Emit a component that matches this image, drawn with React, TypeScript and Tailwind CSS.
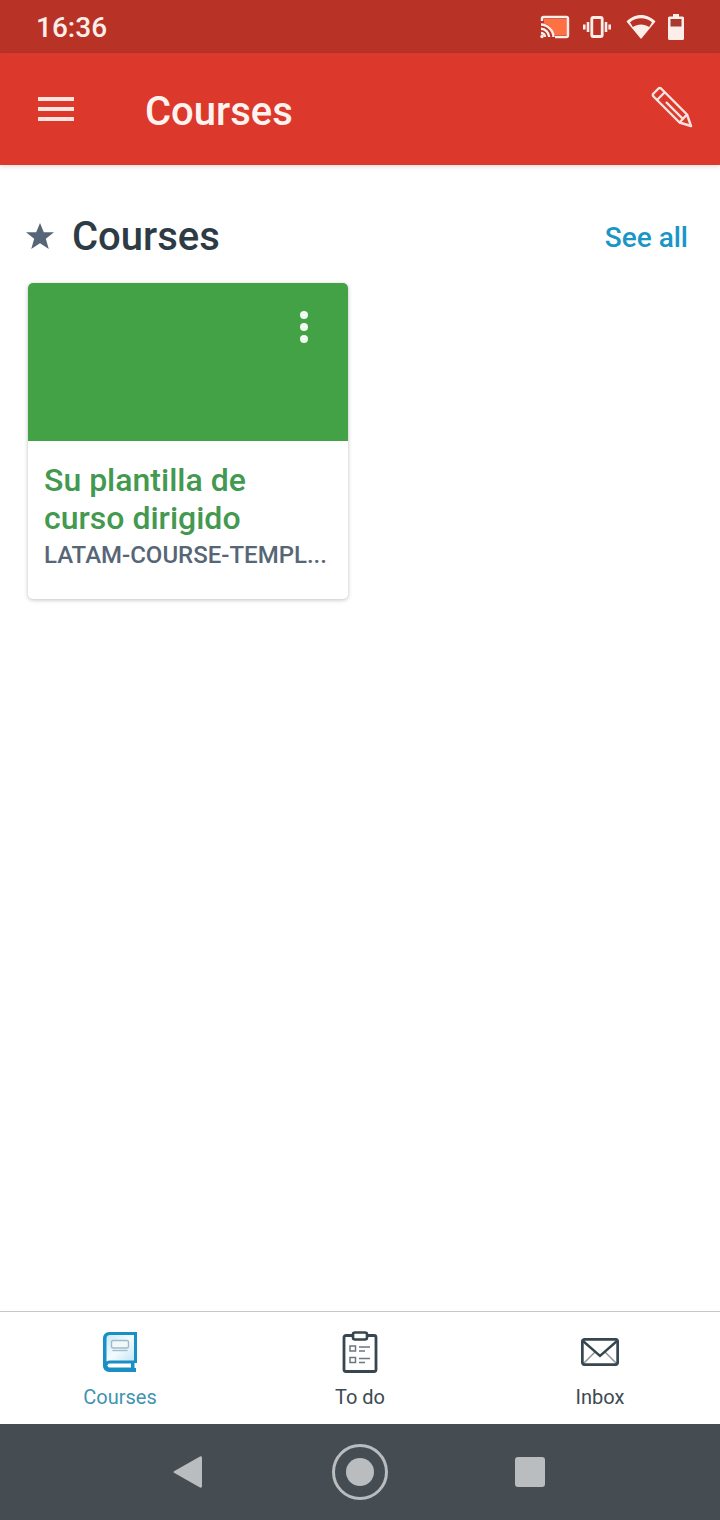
function CastIcon() {
  return (
    <svg width="30" height="24" viewBox="0 0 30 24" fill="none">
      <rect x="4" y="4" width="23" height="16" fill="#ff7043" />
      <path d="M2 6V3.500A1.500 1.500 0 0 1 3.500 2h23A1.500 1.500 0 0 1 28 3.500v17a1.500 1.500 0 0 1-1.500 1.500H15" stroke="#fdeeea" strokeWidth="2.400" />
      <path d="M0 8.500h3C9 8.500 14 14 14 24H0V8.500Z" fill="#b83226" />
      <path d="M1 9.500a13 13 0 0 1 12.500 12.500M1 13.800a8.600 8.600 0 0 1 8.200 8.200M1 18a4.300 4.300 0 0 1 4 4" stroke="#fdeeea" strokeWidth="2.400" />
      <circle cx="2" cy="21.500" r="1.700" fill="#fdeeea" />
    </svg>
  )
}

function VibrateIcon() {
  return (
    <svg width="28" height="22" viewBox="0 0 28 22" fill="none">
      <rect x="8.800" y="1.500" width="10.400" height="19" rx="1.500" stroke="#fdeeea" strokeWidth="2.800" />
      <path d="M5 6v10M1.300 8.500v5M23 6v10M26.700 8.500v5" stroke="#fdeeea" strokeWidth="2.600" />
    </svg>
  )
}

function WifiIcon() {
  return (
    <svg width="30" height="26" viewBox="0 0 30 26" fill="none">
      <path d="M15 25 0.500 7.500C4.500 3.500 9.600 1 15 1s10.500 2.500 14.500 6.500L15 25Z" fill="#fdeeea" />
      <path d="M15 10.500c-3 0-5.800.9-8.200 2.600L4 8.300C7.200 5.800 11 4.300 15 4.300s7.800 1.500 11 4l-2.800 4.800C20.800 11.400 18 10.500 15 10.500Z" fill="#b83226" />
    </svg>
  )
}

function BatteryIcon() {
  return (
    <svg width="16" height="26" viewBox="0 0 16 26">
      <path d="M5 0h6v2.500h3.500A1.500 1.500 0 0 1 16 4v20.500a1.500 1.500 0 0 1-1.500 1.500h-13A1.500 1.500 0 0 1 0 24.500V4a1.500 1.500 0 0 1 1.500-1.500H5V0Z" fill="#fdeeea" />
      <rect x="2.500" y="5" width="11" height="7.500" fill="#a93a30" />
    </svg>
  )
}

function PencilIcon() {
  return (
    <svg width="42" height="42" viewBox="0 0 42 42" fill="none" stroke="#fbe3df" strokeWidth="2.400" strokeLinejoin="round">
      <path d="M2.500 7.500 7.500 2.500a2 2 0 0 1 2.600 0L36 28.500 40 40l-11.500-3.500L2.500 10.500a2 2 0 0 1 0-3Z" />
      <path d="M6.500 13.500 13.500 6.500M29 36l7-7.500M15 16l17 17" />
    </svg>
  )
}

function BookIcon() {
  return (
    <svg width="34" height="40" viewBox="0 0 34 40" fill="none">
      <defs>
        <linearGradient id="page" x1="0" y1="0" x2="1" y2="1">
          <stop offset="0" stopColor="#c9e9f7" />
          <stop offset="0.5" stopColor="#f4fbfe" />
          <stop offset="1" stopColor="#c4e6f5" />
        </linearGradient>
      </defs>
      <path d="M6 0H34V31H31.500V36H33V40H6A6 6 0 0 1 0 34V6A6 6 0 0 1 6 0Z" fill="#1a8fc4" />
      <path d="M7 3H31V28.500H7A6 6 0 0 0 3.500 29.500V6.500A3.500 3.500 0 0 1 7 3Z" fill="url(#page)" />
      <path d="M6.500 31.500H28V35.500H6.500A2 2 0 0 1 6.500 31.500Z" fill="#fff" />
      <rect x="8.500" y="8.500" width="17" height="7.500" rx="1.500" fill="#f2f7f9" stroke="#9dbcc9" strokeWidth="1.400" />
      <path d="M9.500 18.500h15" stroke="#9dbcc9" strokeWidth="1.400" />
    </svg>
  )
}

function TodoIcon() {
  return (
    <svg width="36" height="42" viewBox="0 0 36 42" fill="none">
      <rect x="2" y="4.500" width="32" height="36" rx="2" stroke="#37474f" strokeWidth="2.800" />
      <rect x="11" y="1.500" width="14" height="7" rx="2" fill="#fff" stroke="#37474f" strokeWidth="2.600" />
      <rect x="8" y="15" width="5.500" height="5" stroke="#6b777d" strokeWidth="1.500" />
      <rect x="8" y="26.500" width="5.500" height="5" stroke="#6b777d" strokeWidth="1.500" />
      <path d="M17 16h11M17 20h6M17 27.500h11M17 31.500h6" stroke="#6b777d" strokeWidth="1.500" />
    </svg>
  )
}

function InboxIcon() {
  return (
    <svg width="38" height="28" viewBox="0 0 38 28" fill="none">
      <path d="M2 26 14 14M36 26 24 14" stroke="#8a9499" strokeWidth="1.500" />
      <path d="M2 3 19 18 36 3" stroke="#37474f" strokeWidth="2.400" />
      <rect x="1.300" y="1.300" width="35.400" height="25.400" rx="2.500" stroke="#37474f" strokeWidth="2.800" />
    </svg>
  )
}

const tabs = [
  { label: 'Courses', icon: <BookIcon />, color: 'text-[#3f93b0]' },
  { label: 'To do', icon: <TodoIcon />, color: 'text-[#3c4a52]' },
  { label: 'Inbox', icon: <InboxIcon />, color: 'text-[#3c4a52]' },
]

export default function App() {
  return (
    <div className="w-[720px] h-[1520px] flex flex-col bg-white font-['Roboto',sans-serif] overflow-hidden">
      <div className="h-[53px] shrink-0 bg-[#b83226] flex items-center pl-[36px] pr-[36px]">
        <span className="mt-[2px] text-[28px] font-medium text-[#fdeeea] leading-none">16:36</span>
        <div className="ml-auto flex items-center">
          <CastIcon />
          <span className="ml-[13px]"><VibrateIcon /></span>
          <span className="ml-[15px]"><WifiIcon /></span>
          <span className="ml-[12px]"><BatteryIcon /></span>
        </div>
      </div>

      <div className="h-[112px] shrink-0 bg-[#dc382c] flex items-center pl-[38px] pr-[27px] shadow-[0_2px_4px_rgba(0,0,0,0.12)] z-10">
        <div className="w-[36px] flex flex-col gap-[5.5px]">
          <div className="h-[4.5px] bg-[#fbe3df]" />
          <div className="h-[4.5px] bg-[#fbe3df]" />
          <div className="h-[4.5px] bg-[#fbe3df]" />
        </div>
        <span className="ml-[71px] mt-[6px] text-[40px] font-medium text-[#fff3f0] leading-none">Courses</span>
        <span className="ml-auto mt-[-4px]"><PencilIcon /></span>
      </div>

      <div className="flex-1 px-[28px]">
        <div className="flex items-center mt-[47px] h-[48px]">
          <svg width="28" height="26" viewBox="0 0 28 26" className="ml-[-2px]">
            <path d="M14 0l3.800 9.300H28l-8.200 6.500 3 10.200L14 20.200 5.200 26l3-10.200L0 9.300h10.200L14 0Z" fill="#566676" />
          </svg>
          <span className="ml-[18px] mt-[2px] text-[40px] font-medium text-[#2d3b45] leading-none">Courses</span>
          <span className="ml-auto mr-[4px] mt-[4px] text-[28px] font-medium text-[#1a96c6] leading-none">See all</span>
        </div>

        <div className="mt-[23px] w-[320px] h-[316px] rounded-[5px] bg-white shadow-[0_1px_4px_rgba(0,0,0,0.25)] overflow-hidden">
          <div className="h-[158px] bg-[#43a245] flex justify-end pt-[28px] pr-[40px]">
            <div className="flex flex-col gap-[4px]">
              <div className="w-[8px] h-[8px] rounded-full bg-[#effaf0]" />
              <div className="w-[8px] h-[8px] rounded-full bg-[#effaf0]" />
              <div className="w-[8px] h-[8px] rounded-full bg-[#effaf0]" />
            </div>
          </div>
          <div className="pt-[20px] px-[16px]">
            <div className="text-[32px] font-medium leading-[38px] text-[#43994f]">
              Su plantilla de
              <br />
              curso dirigido
            </div>
            <div className="mt-[1px] text-[24px] font-medium leading-[35px] text-[#566676] whitespace-nowrap">
              LATAM-COURSE-TEMPL...
            </div>
          </div>
        </div>
      </div>

      <div className="h-[113px] shrink-0 border-t border-[#c7c7c7] grid grid-cols-3 bg-white">
        {tabs.map(t => (
          <div key={t.label} className="flex flex-col items-center">
            <div className="h-[42px] mt-[19px] flex items-center justify-center">{t.icon}</div>
            <span className={`mt-[12px] text-[20px] leading-[25px] ${t.color}`}>{t.label}</span>
          </div>
        ))}
      </div>

      <div className="h-[96px] shrink-0 bg-[#454c52] flex items-center justify-center pb-[1px] pr-[2px]">
        <svg width="30" height="34" viewBox="0 0 30 34" className="mr-[129px]">
          <path d="M27 1.500a1.500 1.500 0 0 1 2 1.300v28.400a1.500 1.500 0 0 1-2 1.300L1 17.800a1 1 0 0 1 0-1.600L27 1.500Z" fill="#b9bdbf" />
        </svg>
        <div className="w-[56px] h-[56px] rounded-full border-[3px] border-[#b9bdbf] flex items-center justify-center">
          <div className="w-[28px] h-[28px] rounded-full bg-[#b9bdbf]" />
        </div>
        <div className="ml-[127px] w-[30px] h-[30px] rounded-[3px] bg-[#b9bdbf]" />
      </div>
    </div>
  )
}
